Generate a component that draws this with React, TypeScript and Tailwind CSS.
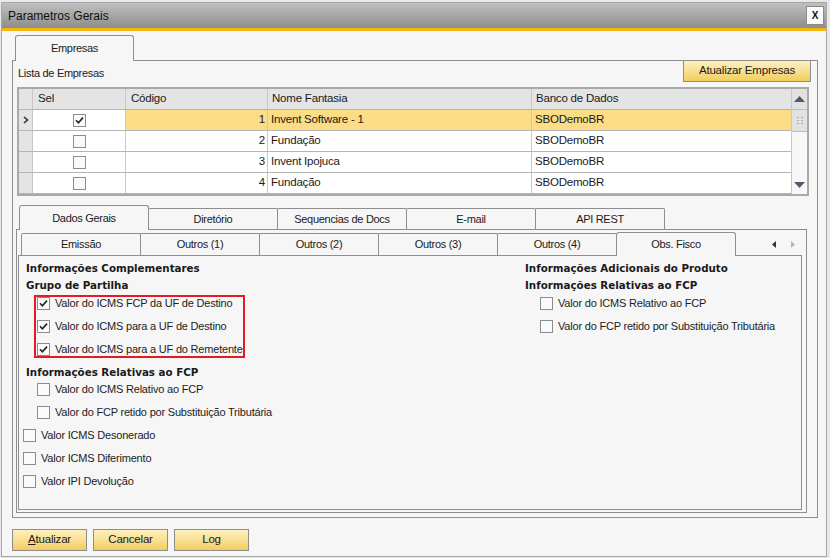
import React from 'react';

const empresas = [
  { codigo: 1, nome: 'Invent Software - 1', banco: 'SBODemoBR', sel: true },
  { codigo: 2, nome: 'Fundação', banco: 'SBODemoBR', sel: false },
  { codigo: 3, nome: 'Invent Ipojuca', banco: 'SBODemoBR', sel: false },
  { codigo: 4, nome: 'Fundação', banco: 'SBODemoBR', sel: false },
];

const topTabs = ['Dados Gerais', 'Diretório', 'Sequencias de Docs', 'E-mail', 'API REST'];
const subTabs = ['Emissão', 'Outros (1)', 'Outros (2)', 'Outros (3)', 'Outros (4)', 'Obs. Fisco'];

function Check({ checked }: { checked?: boolean }) {
  return (
    <span className="w-[13px] h-[13px] border border-[#8c8c8c] bg-[#fafafa] flex items-center justify-center shrink-0">
      {checked && (
        <svg width="9" height="9" viewBox="0 0 9 9">
          <path d="M1 4.3 L3.4 6.8 L8 1.6" fill="none" stroke="#222" strokeWidth="1.6" />
        </svg>
      )}
    </span>
  );
}

function CheckRow({ label, checked }: { label: string; checked?: boolean }) {
  return (
    <div className="h-[13px] flex items-center gap-[5px] whitespace-nowrap">
      <Check checked={checked} />
      <span className="text-[11px] tracking-[-0.2px] text-[#1c1c1c] leading-none">{label}</span>
    </div>
  );
}

function Header({ children }: { children: React.ReactNode }) {
  return (
    <div className="h-[17px] flex items-center font-['DejaVu_Sans',sans-serif] font-bold text-[10.3px] text-[#1a1a1a] whitespace-nowrap">
      {children}
    </div>
  );
}

function YellowButton({ children, className }: { children: React.ReactNode; className?: string }) {
  return (
    <button
      className={`h-[22px] border border-[#8e8e8e] bg-gradient-to-b from-[#fdf0bf] to-[#f2cd5d] text-[11.5px] tracking-[-0.2px] text-[#1a1a1a] flex items-center justify-center ${className ?? ''}`}
    >
      {children}
    </button>
  );
}

export default function App() {
  return (
    <div className="w-[830px] h-[558px] bg-[#e9e9e9] pl-[1px] pt-[2px] pr-[3px] pb-[1px] font-['Liberation_Sans',Arial,sans-serif] text-[#1a1a1a]">
      <div className="h-full border border-[#a6a6a6] bg-[#f6f6f6] flex flex-col">
        {/* Title bar */}
        <div className="h-[25px] bg-gradient-to-b from-[#c0c0c0] to-[#8d8d8d] flex items-center justify-between pl-[6px] pr-[2px]">
          <span className="text-[12px] text-[#111]">Parametros Gerais</span>
          <div className="w-[18px] h-[19px] bg-[#fbfbfb] border border-[#8a8a8a] flex items-center justify-center text-[10px] font-bold text-[#111]">
            X
          </div>
        </div>
        <div className="h-[3px] bg-[#f6b60e]" />

        {/* Empresas tab */}
        <div className="ml-[13px] mt-[4px] -mb-px relative z-10 w-[119px] h-[26px] border border-b-0 border-[#8e8e8e] rounded-t-[3px] bg-[#f6f6f6] flex items-center justify-center text-[11px] tracking-[-0.3px]">
          Empresas
        </div>

        {/* Empresas panel */}
        <div className="ml-[10px] w-[806px] h-[458px] border border-[#8e8e8e] flex flex-col">
          <div className="h-[21px] flex items-end justify-between pr-[6px]">
            <span className="pl-[5px] pb-px text-[11px] tracking-[-0.3px]">Lista de Empresas</span>
            <YellowButton className="w-[128px] h-[21px]">Atualizar Empresas</YellowButton>
          </div>

          {/* Grid */}
          <div className="ml-[4px] mt-[5px] w-[792px] border-2 border-[#a9a9a9] flex text-[11.5px] tracking-[-0.2px]">
            <div className="flex flex-col">
              <div className="h-[21px] flex bg-[#e4e4e4] border-b border-[#b5b5b5]">
                <div className="w-[14px] border-r border-[#c8c8c8]" />
                <div className="w-[93px] border-r border-[#c8c8c8] pl-[5px] flex items-center">Sel</div>
                <div className="w-[142px] border-r border-[#c8c8c8] pl-[5px] flex items-center">Código</div>
                <div className="w-[264px] border-r border-[#c8c8c8] pl-[4px] flex items-center">Nome Fantasia</div>
                <div className="w-[259px] pl-[4px] flex items-center">Banco de Dados</div>
              </div>
              {empresas.map((e, i) => (
                <div key={e.codigo} className="h-[21px] flex border-b border-[#b5b5b5]">
                  <div className="w-[14px] bg-[#e4e4e4] border-r border-[#c8c8c8] flex items-center justify-center">
                    {i === 0 && (
                      <svg width="6" height="8" viewBox="0 0 6 8">
                        <path d="M1 1 L4.5 4 L1 7" fill="none" stroke="#333" strokeWidth="1.6" />
                      </svg>
                    )}
                  </div>
                  <div className="w-[93px] bg-white border-r border-[#c8c8c8] flex items-center justify-center">
                    <Check checked={e.sel} />
                  </div>
                  <div
                    className={`w-[142px] border-r border-[#c8c8c8] flex items-center justify-end pr-[2px] ${i === 0 ? 'bg-[#fadd85]' : 'bg-white'}`}
                  >
                    {e.codigo}
                  </div>
                  <div
                    className={`w-[264px] border-r border-[#c8c8c8] flex items-center pl-[3px] ${i === 0 ? 'bg-[#fadd85]' : 'bg-white'}`}
                  >
                    {e.nome}
                  </div>
                  <div className={`w-[259px] flex items-center pl-[3px] ${i === 0 ? 'bg-[#fadd85]' : 'bg-white'}`}>
                    {e.banco}
                  </div>
                </div>
              ))}
            </div>

            {/* Scrollbar */}
            <div className="w-[16px] bg-[#f7f7f7] border-l border-[#c8c8c8] flex flex-col">
              <div className="h-[21px] bg-[#e2e2e2] border-b border-[#bdbdbd] flex items-center justify-center">
                <svg width="11" height="6" viewBox="0 0 11 6">
                  <path d="M0 6 L5.5 0 L11 6 Z" fill="#4c5c6c" />
                </svg>
              </div>
              <div className="h-[22px] bg-[#e2e2e2] border-b border-[#bdbdbd] flex items-center justify-center">
                <svg width="6" height="7" viewBox="0 0 6 7">
                  <g fill="#a8a8a8">
                    <rect x="0" y="0" width="2" height="1" />
                    <rect x="4" y="0" width="2" height="1" />
                    <rect x="0" y="3" width="2" height="1" />
                    <rect x="4" y="3" width="2" height="1" />
                    <rect x="0" y="6" width="2" height="1" />
                    <rect x="4" y="6" width="2" height="1" />
                  </g>
                </svg>
              </div>
              <div className="flex-1" />
              <div className="h-[18px] flex items-center justify-center">
                <svg width="11" height="6" viewBox="0 0 11 6">
                  <path d="M0 0 L5.5 6 L11 0 Z" fill="#4c5c6c" />
                </svg>
              </div>
            </div>
          </div>

          {/* Dados Gerais group */}
          <div className="ml-[3px] mt-[9px] flex flex-col">
            <div className="ml-[3px] h-[25px] -mb-px relative z-10 flex items-end text-[11px] tracking-[-0.3px]">
              {topTabs.map((t, i) =>
                i === 0 ? (
                  <div
                    key={t}
                    className="relative z-20 w-[130px] h-[25px] border border-b-0 border-[#8e8e8e] rounded-t-[3px] bg-[#f6f6f6] flex items-center justify-center"
                  >
                    {t}
                  </div>
                ) : (
                  <div
                    key={t}
                    className="-ml-px w-[130px] h-[22px] border border-b-0 border-[#8e8e8e] rounded-t-[2px] flex items-center justify-center pb-px"
                  >
                    {t}
                  </div>
                )
              )}
            </div>

            <div className="w-[791px] h-[284px] border border-[#8e8e8e] flex flex-col">
              {/* Sub tabs */}
              <div className="h-[26px] -mb-px relative z-10 flex items-end text-[11px] tracking-[-0.3px]">
                <div className="ml-[4px] flex items-end">
                  {subTabs.map((t, i) =>
                    i === subTabs.length - 1 ? (
                      <div
                        key={t}
                        className="relative z-20 -ml-px w-[120px] h-[24px] border border-b-0 border-[#8e8e8e] rounded-t-[3px] bg-[#f6f6f6] flex items-center justify-center"
                      >
                        {t}
                      </div>
                    ) : (
                      <div
                        key={t}
                        className={`${i === 0 ? '' : '-ml-px'} w-[120px] h-[23px] border border-b-0 border-[#8e8e8e] rounded-t-[2px] flex items-center justify-center pb-px`}
                      >
                        {t}
                      </div>
                    )
                  )}
                </div>
                <div className="ml-auto mr-[11px] h-[23px] flex items-center gap-[15px]">
                  <svg width="4" height="7" viewBox="0 0 4 7">
                    <path d="M4 0 L0 3.5 L4 7 Z" fill="#333" />
                  </svg>
                  <svg width="4" height="7" viewBox="0 0 4 7">
                    <path d="M0 0 L4 3.5 L0 7 Z" fill="#a9b8c8" />
                  </svg>
                </div>
              </div>

              {/* Obs. Fisco panel */}
              <div className="ml-px w-[784px] h-[255px] border border-[#8e8e8e] flex pt-[4px]">
                <div className="w-[506px] pl-[4px] flex flex-col">
                  <div className="pl-[3px]">
                    <Header>Informações Complementares</Header>
                    <Header>Grupo de Partilha</Header>
                  </div>
                  <div className="ml-[11px] mt-px w-[211px] border-2 border-[#e41b23] pl-px flex flex-col gap-[10px]">
                    <CheckRow checked label="Valor do ICMS FCP da UF de Destino" />
                    <CheckRow checked label="Valor do ICMS para a UF de Destino" />
                    <CheckRow checked label="Valor do ICMS para a UF do Remetente" />
                  </div>
                  <div className="pl-[3px] mt-[6px]">
                    <Header>Informações Relativas ao FCP</Header>
                  </div>
                  <div className="mt-[2px] flex flex-col gap-[10px]">
                    <div className="ml-[14px]">
                      <CheckRow label="Valor do ICMS Relativo ao FCP" />
                    </div>
                    <div className="ml-[14px]">
                      <CheckRow label="Valor do FCP retido por Substituição Tributária" />
                    </div>
                    <CheckRow label="Valor ICMS Desonerado" />
                    <CheckRow label="Valor ICMS Diferimento" />
                    <CheckRow label="Valor IPI Devolução" />
                  </div>
                </div>

                <div className="flex-1 flex flex-col">
                  <Header>Informações Adicionais do Produto</Header>
                  <Header>Informações Relativas ao FCP</Header>
                  <div className="ml-[15px] mt-[3px] flex flex-col gap-[10px]">
                    <CheckRow label="Valor do ICMS Relativo ao FCP" />
                    <CheckRow label="Valor do FCP retido por Substituição Tributária" />
                  </div>
                </div>
              </div>
            </div>
          </div>
        </div>

        {/* Bottom buttons */}
        <div className="ml-[10px] mt-[11px] flex gap-[6px]">
          <YellowButton className="w-[75px]">
            <span className="underline">A</span>tualizar
          </YellowButton>
          <YellowButton className="w-[75px]">Cancelar</YellowButton>
          <YellowButton className="w-[75px]">Log</YellowButton>
        </div>
      </div>
    </div>
  );
}
